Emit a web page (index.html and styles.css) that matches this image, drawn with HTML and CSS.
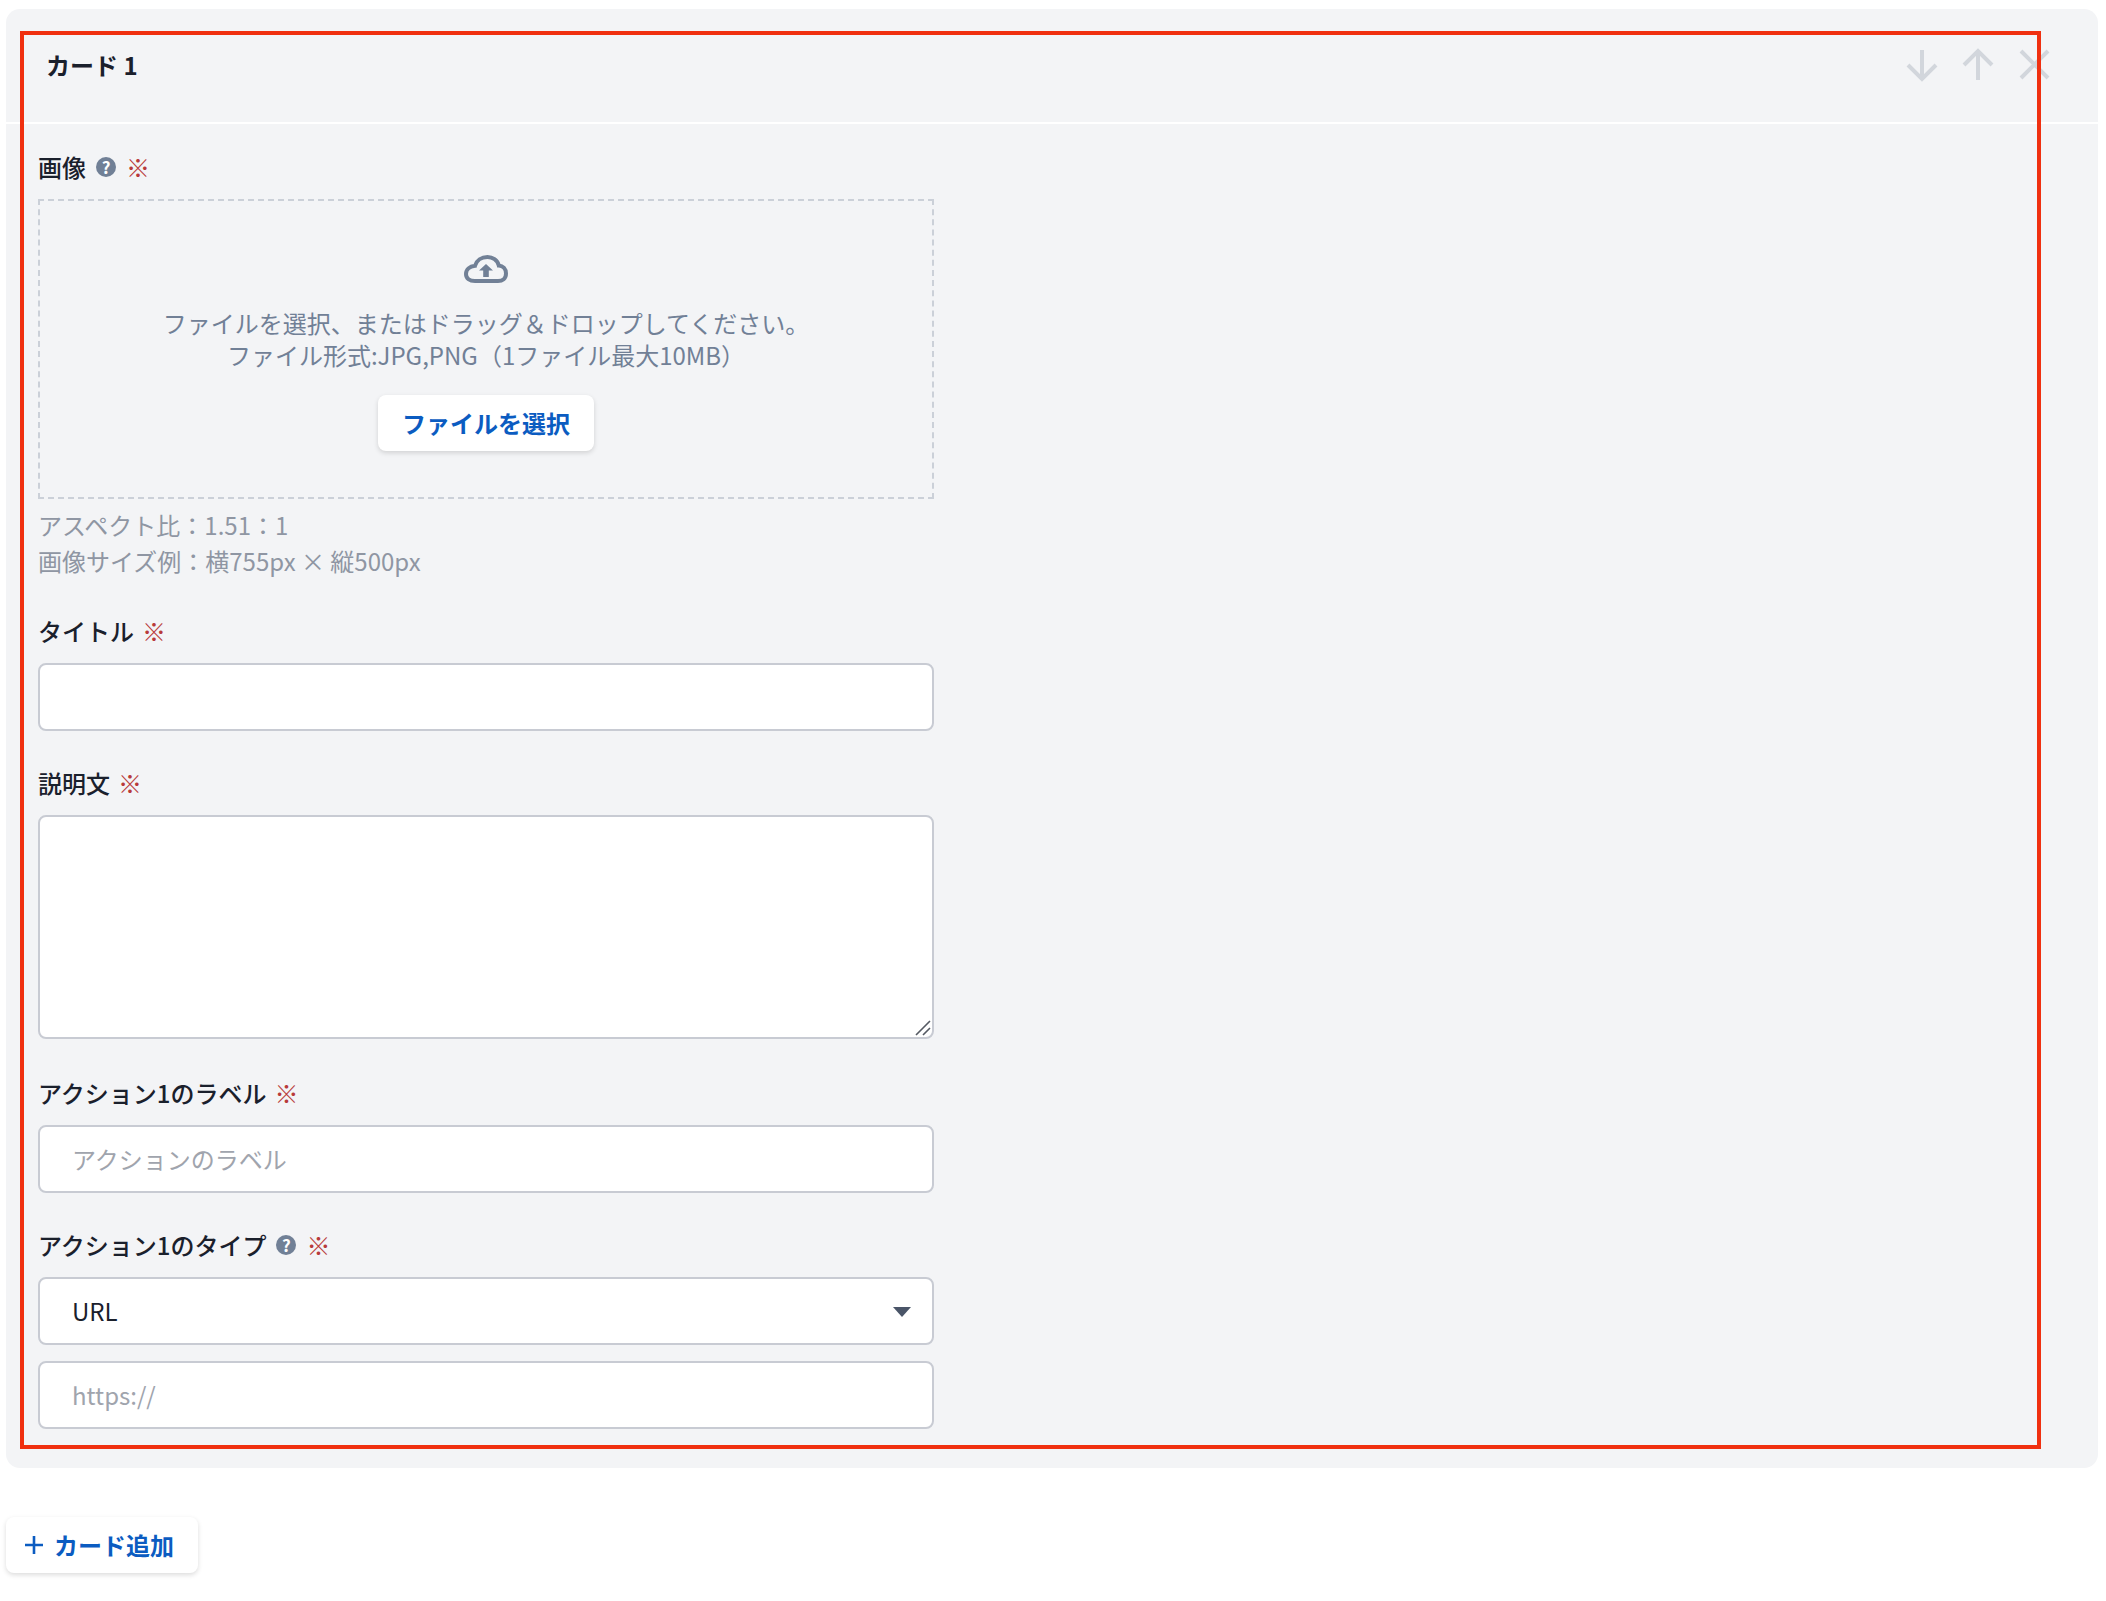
FILE: index.html
```html
<!DOCTYPE html>
<html lang="ja">
<head>
<meta charset="utf-8">
<title>カード</title>
<link rel="stylesheet" href="styles.css">
</head>
<body>
<div class="page">
  <section class="panel">
    <header class="panel-head">
      <h2 class="panel-title">カード 1</h2>
      <div class="panel-tools">
        <svg class="tool" viewBox="0 0 36 36"><path d="M18 3V32M4 18L18 32L32 18"/></svg>
        <svg class="tool" viewBox="0 0 36 36"><path d="M18 33V4M4 18L18 4L32 18"/></svg>
        <svg class="tool" viewBox="0 0 36 36"><path d="M5 4L32 31M32 4L5 31"/></svg>
      </div>
    </header>
    <div class="panel-body">
      <div class="field field-image">
        <div class="label"><span>画像</span><span class="help">?</span><span class="req">※</span></div>
        <div class="drop">
          <svg class="cloud" viewBox="0 0 44 28"><path class="cloud-line" d="M11 26H34C38.5 26 42 23.5 42 18.5C42 14 39 10.8 34.8 10.5C33.5 5 28.5 2 23.5 2C17.5 2 12.5 5.5 11 10.8C5.5 11.3 2 14.5 2 19C2 23.5 5.5 26 11 26Z"/><path class="cloud-arrow" d="M22 9L29 15.5H24.8V22H19.2V15.5H15Z"/></svg>
          <p class="drop-text">ファイルを選択、またはドラッグ＆ドロップしてください。<br>ファイル形式:JPG,PNG（1ファイル最大10MB）</p>
          <button class="btn" type="button">ファイルを選択</button>
        </div>
        <p class="hint">アスペクト比：1.51：1<br>画像サイズ例：横755px × 縦500px</p>
      </div>
      <div class="field">
        <div class="label"><span>タイトル</span><span class="req">※</span></div>
        <input class="control" type="text">
      </div>
      <div class="field">
        <div class="label"><span>説明文</span><span class="req">※</span></div>
        <div class="area-wrap">
          <textarea class="control area"></textarea>
          <svg class="grip" viewBox="0 0 18 18"><path d="M2 16L16 2M9 16L16 9"/></svg>
        </div>
      </div>
      <div class="field">
        <div class="label"><span>アクション1のラベル</span><span class="req">※</span></div>
        <input class="control" type="text" placeholder="アクションのラベル">
      </div>
      <div class="field">
        <div class="label"><span>アクション1のタイプ</span><span class="help">?</span><span class="req">※</span></div>
        <div class="select-wrap">
          <select class="control select"><option>URL</option></select>
          <span class="caret"></span>
        </div>
        <input class="control" type="text" placeholder="https://">
      </div>
    </div>
    <div class="highlight"></div>
  </section>
  <button class="btn btn-add" type="button"><svg class="plus" viewBox="0 0 20 20"><path d="M10 1V19M1 10H19"/></svg>カード追加</button>
</div>
</body>
</html>
```
FILE: styles.css
```css
* { box-sizing: border-box; }
html, body { margin: 0; padding: 0; background: #fff; }
body {
  font-family: "Noto Sans CJK JP", "Noto Sans", sans-serif;
  font-size: 24px;
  color: #1a202c;
}
.page {
  display: flex;
  flex-direction: column;
  align-items: flex-start;
  padding: 9px 8px 28px 6px;
  min-height: 1601px;
}
.panel {
  position: relative;
  width: 2092px;
  height: 1459px;
  background: #f3f4f6;
  border-radius: 14px;
}
.panel-head {
  display: flex;
  justify-content: space-between;
  align-items: flex-start;
  height: 115px;
  padding: 38px 46px 0 40px;
  border-bottom: 2px solid #fff;
}
.panel-title {
  margin: 0;
  font-size: 24px;
  line-height: 36px;
  font-weight: 700;
}
.panel-tools { display: flex; gap: 20px; }
.tool {
  width: 36px;
  height: 36px;
  fill: none;
  stroke: #d2d6dc;
  stroke-width: 4;
}
.panel-body {
  display: flex;
  flex-direction: column;
  gap: 34px;
  padding: 25px 0 0 32px;
  width: 928px;
}
.field {
  display: flex;
  flex-direction: column;
  gap: 14px;
}
.field-image { gap: 0; }
.field-image .label { margin-bottom: 14px; }
.label {
  display: flex;
  align-items: center;
  height: 36px;
  font-weight: 500;
  font-size: 24px;
  line-height: 36px;
}
.help {
  display: flex;
  align-items: center;
  justify-content: center;
  width: 20px;
  height: 20px;
  margin: 0 2px 0 10px;
  border-radius: 50%;
  background: #718096;
  color: #fff;
  font-size: 17px;
  line-height: 20px;
  font-weight: 700;
}
.req {
  margin-left: 8px;
  color: #b83a3a;
  font-size: 24px;
  font-weight: 400;
}
.drop {
  display: flex;
  flex-direction: column;
  align-items: center;
  height: 300px;
  padding-top: 54px;
  border: 2px dashed #cbd0d8;
}
.cloud { width: 44px; height: 28px; }
.cloud-line { fill: none; stroke: #718096; stroke-width: 4; }
.cloud-arrow { fill: #718096; }
.drop-text {
  margin: 24px 0 0;
  text-align: center;
  color: #718096;
  font-size: 24px;
  line-height: 32px;
}
.btn {
  display: flex;
  align-items: center;
  height: 56px;
  padding: 0 24px;
  border: 0;
  border-radius: 8px;
  background: #fff;
  color: #0b5cc1;
  font: 700 24px/36px "Noto Sans CJK JP", "Noto Sans", sans-serif;
  box-shadow: 0 2px 5px rgba(0, 0, 0, .14);
}
.drop .btn { margin-top: 24px; }
.hint {
  margin: 8px 0 0;
  color: #8f96a3;
  font-size: 24px;
  line-height: 36px;
}
.control {
  display: block;
  width: 896px;
  height: 68px;
  padding: 0 32px;
  border: 2px solid #c8cbd3;
  border-radius: 8px;
  background: #fff;
  color: #1a202c;
  font: 400 24px/36px "Noto Sans CJK JP", "Noto Sans", sans-serif;
  outline: 0;
}
input.control { padding-bottom: 2px; }
.control::placeholder { color: #a0a4ad; opacity: 1; }
.area-wrap { position: relative; margin-bottom: 2px; }
.area { height: 224px; padding-top: 14px; resize: none; }
.grip {
  position: absolute;
  right: 2px;
  bottom: 2px;
  width: 18px;
  height: 18px;
  fill: none;
  stroke: #555a63;
  stroke-width: 1.6;
}
.select { appearance: none; -webkit-appearance: none; }
.select-wrap { position: relative; margin-bottom: 2px; }
.caret {
  position: absolute;
  top: 30px;
  right: 23px;
  width: 0;
  height: 0;
  border-left: 9px solid transparent;
  border-right: 9px solid transparent;
  border-top: 10px solid #4a5568;
}
.highlight {
  position: absolute;
  left: 14px;
  top: 22px;
  width: 2021px;
  height: 1418px;
  border: 4px solid #f03010;
  pointer-events: none;
}
.btn-add {
  margin-top: 49px;
  padding: 0 24px 0 18px;
  gap: 10px;
}
.plus {
  width: 20px;
  height: 20px;
  fill: none;
  stroke: #0b5cc1;
  stroke-width: 2.6;
}
```
